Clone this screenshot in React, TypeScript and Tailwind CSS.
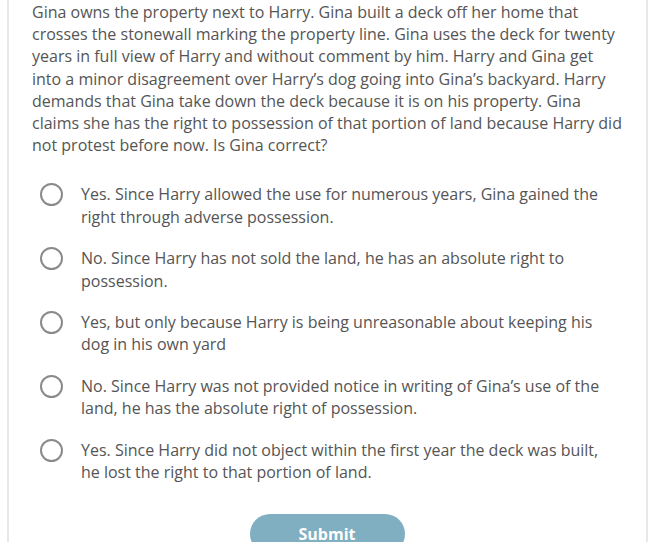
import React from "react";

const options = [
  "Yes. Since Harry allowed the use for numerous years, Gina gained the right through adverse possession.",
  "No. Since Harry has not sold the land, he has an absolute right to possession.",
  "Yes, but only because Harry is being unreasonable about keeping his dog in his own yard",
  "No. Since Harry was not provided notice in writing of Gina\u2019s use of the land, he has the absolute right of possession.",
  "Yes. Since Harry did not object within the first year the deck was built, he lost the right to that portion of land.",
];

export default function App() {
  return (
    <div className="w-[654px] h-[542px] overflow-hidden bg-white" style={{ fontFamily: '"Open Sans", sans-serif' }}>
      <div className="ml-[7px] w-[641px] h-[542px] border-x-2 border-[#e8e8e8] bg-white pl-[23px] pr-[22px] pt-[1px] text-[16px] leading-[22.2px] text-[#555]">
        <p>
          Gina owns the property next to Harry. Gina built a deck off her home that crosses the stonewall marking the property line. Gina uses the deck for twenty years in full view of Harry and without comment by him. Harry and Gina get into a minor disagreement over Harry&#8217;s dog going into Gina&#8217;s backyard. Harry demands that Gina take down the deck because it is on his property. Gina claims she has the right to possession of that portion of land because Harry did not protest before now. Is Gina correct?
        </p>
        <div className="mt-[27px] flex flex-col gap-[19.5px]">
          {options.map((o, i) => (
            <label key={i} className="flex items-start">
              <span className="ml-[8px] mt-0 w-[23px] h-[23px] shrink-0 rounded-full border-2 border-[#8a8a8a] bg-white" />
              <span className="ml-[18px] pr-[20px]">{o}</span>
            </label>
          ))}
        </div>
        <div className="mt-[31px] flex justify-center pr-[2px]">
          <button className="w-[155px] h-[40px] rounded-full bg-[#80afc1] text-white font-bold text-[16px] leading-[22px] pb-[1px]">
            Submit
          </button>
        </div>
      </div>
    </div>
  );
}
